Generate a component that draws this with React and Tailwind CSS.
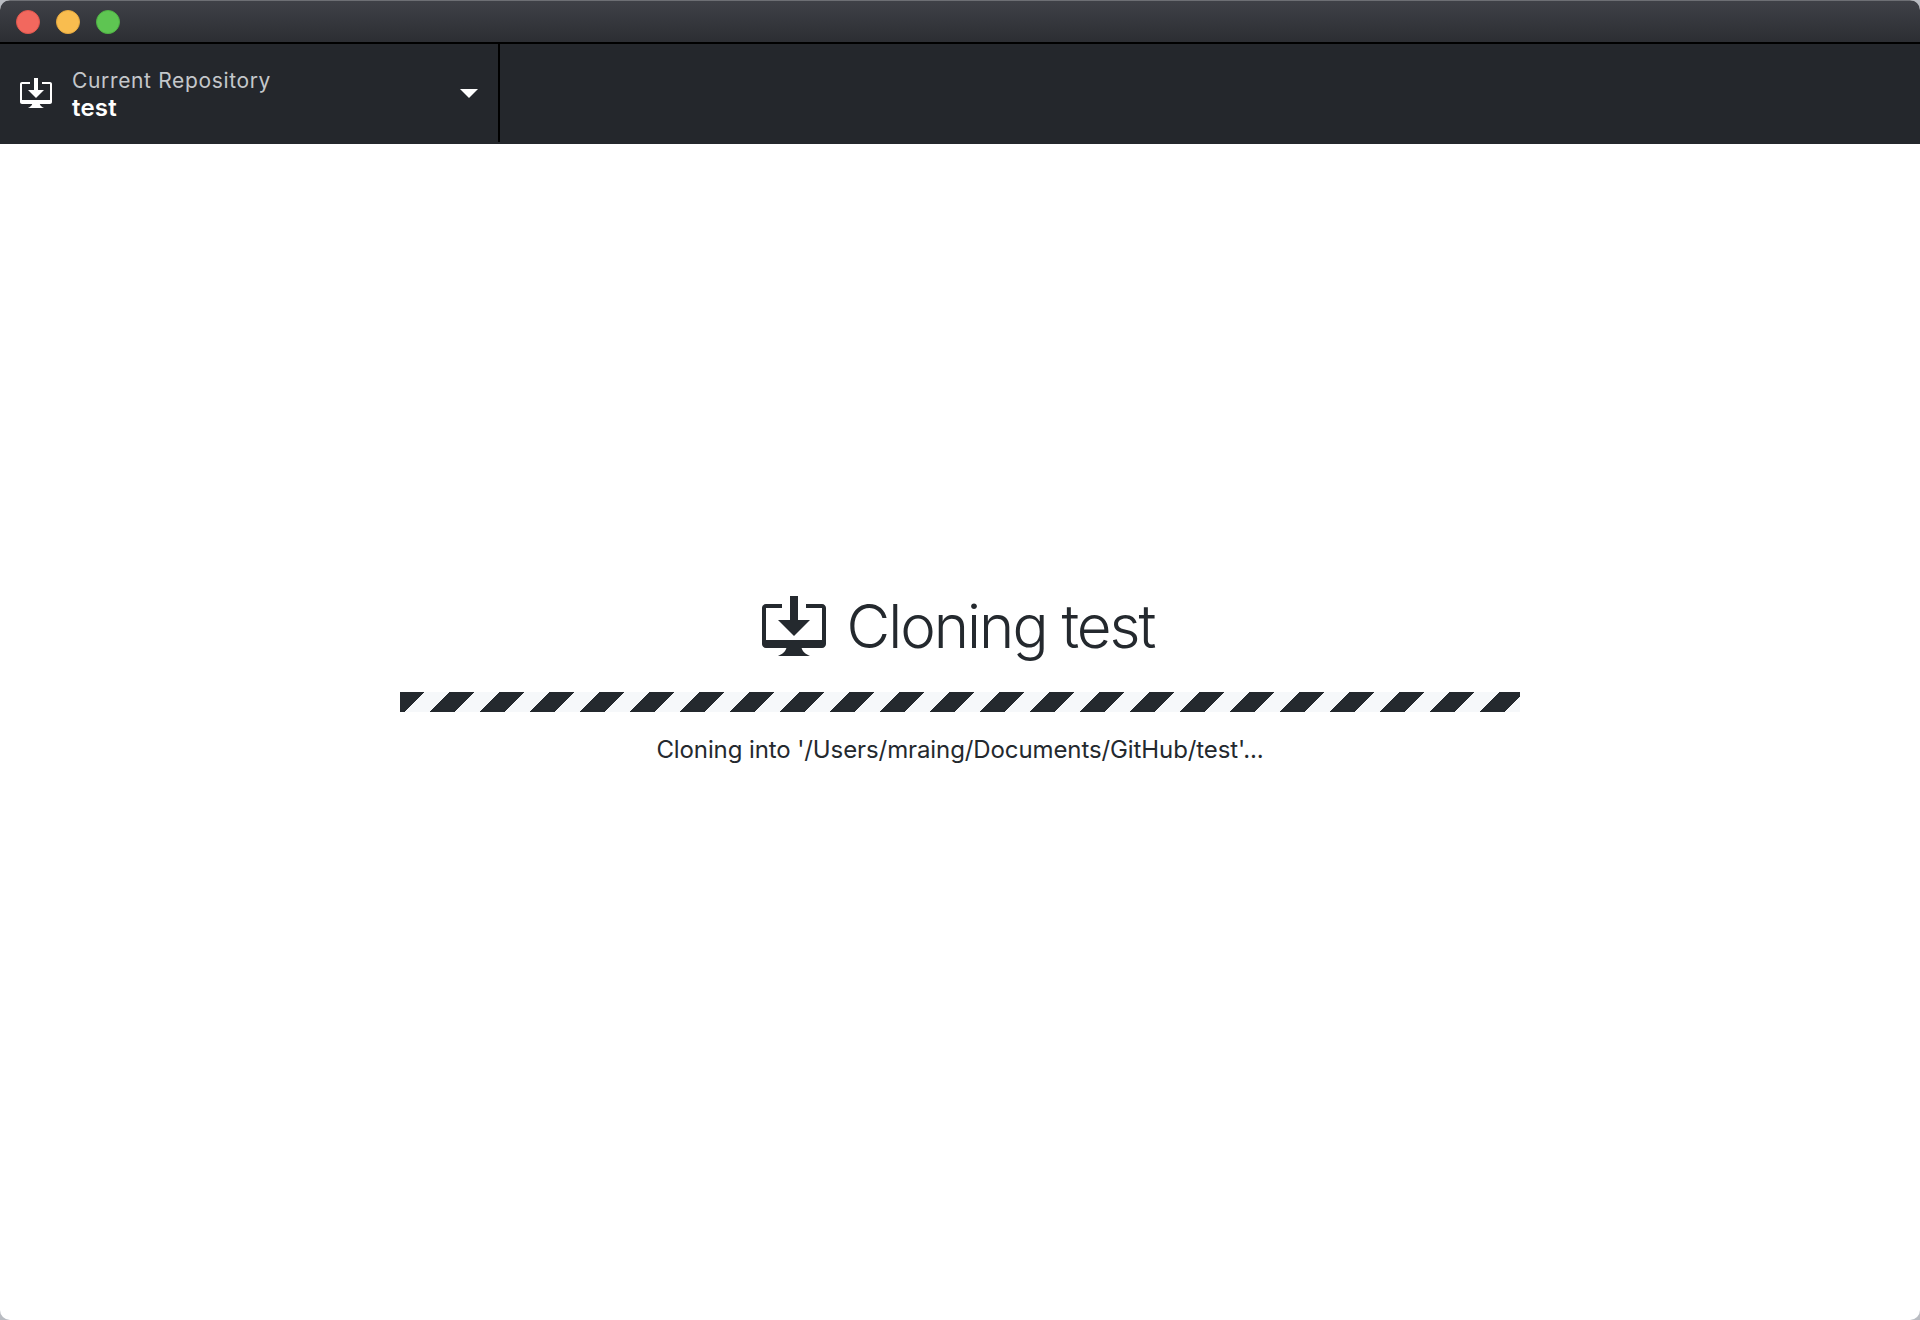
import React from "react"

const sans = "font-['Inter','Noto_Sans',sans-serif]"

function DesktopDownload({ className }) {
  return (
    <svg viewBox="0 0 16 15" fill="currentColor" className={className}>
      <path d="M4 6h3V0h2v6h3l-4 4-4-4zm11-4h-4v1h4v8H1V3h4V2H1c-.55 0-1 .45-1 1v9c0 .55.45 1 1 1h5.1c-.2.9-1.1 1.6-2.1 2h8c-1-.4-1.9-1.1-2.1-2H15c.55 0 1-.45 1-1V3c0-.55-.45-1-1-1z" />
    </svg>
  )
}

export default function App() {
  return (
    <div className={`${sans} h-[1320px] w-full bg-[#b9bcc2] text-[#24292e]`}>
      <div className="flex h-full flex-col overflow-hidden rounded-[10px] bg-white">
        {/* title bar */}
        <div className="flex h-[44px] shrink-0 items-center gap-4 border-b-2 border-black border-t border-t-[#6d6f74] bg-gradient-to-b from-[#3f4147] to-[#2c2e33] pl-4">
          <div className="h-6 w-6 rounded-full border border-[#e0574d] bg-[#f2685e]"></div>
          <div className="h-6 w-6 rounded-full border border-[#e6a93f] bg-[#f9bd4f]"></div>
          <div className="h-6 w-6 rounded-full border border-[#4fb244] bg-[#5ec552]"></div>
        </div>

        {/* toolbar */}
        <div className="flex h-[100px] shrink-0 items-start bg-[#24272c] text-white">
          <div className="flex h-[98px] w-[500px] items-center border-r-2 border-black pl-5 pr-5">
            <DesktopDownload className="h-[30px] w-8 shrink-0" />
            <div className="ml-5 mt-1 flex-1">
              <div className="text-[21px] leading-[26px] tracking-[0.65px] text-[#c4c7cb]">Current Repository</div>
              <div className="text-[24px] font-semibold leading-[28px] tracking-[0.2px]">test</div>
            </div>
            <svg viewBox="0 0 18 9" fill="currentColor" className="h-[9px] w-[18px] shrink-0">
              <path d="M0 0h18L9 9z" />
            </svg>
          </div>
        </div>

        {/* clone progress */}
        <div className="flex flex-1 flex-col items-center pt-[446px]">
          <div className="flex items-center gap-[21px] pr-[4px]">
            <DesktopDownload className="h-[60px] w-16 shrink-0" />
            <h1 className="text-[60px] font-light leading-[72px] tracking-[-2px]">Cloning test</h1>
          </div>
          <div className="mt-[30px] h-5 w-[1120px] bg-[repeating-linear-gradient(135deg,#24292e_0px,#24292e_17px,#f6f8fa_17px,#f6f8fa_35.355px)]"></div>
          <p className="mt-[23px] text-[24px] leading-[30px] tracking-[-0.1px]">Cloning into '/Users/mraing/Documents/GitHub/test'...</p>
        </div>
      </div>
    </div>
  )
}
